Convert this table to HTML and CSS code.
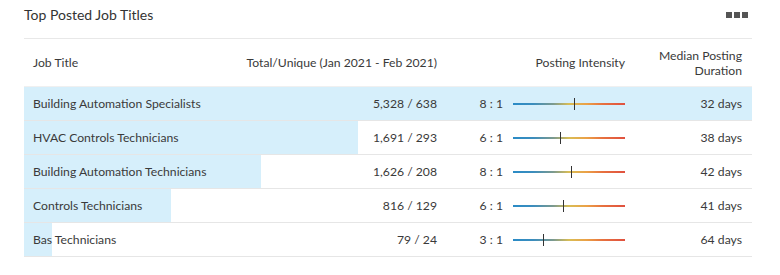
FILE: index.html
```html
<!DOCTYPE html>
<html>
<head>
<meta charset="utf-8">
<link rel="stylesheet" href="styles.css">
</head>
<body>
<div class="card">
  <div class="card-head">
    <h2 class="title">Top Posted Job Titles</h2>
    <div class="more"><span></span><span></span><span></span></div>
  </div>
  <div class="table">
    <div class="row head">
      <div class="c-title">Job Title</div>
      <div class="c-total">Total/Unique (Jan 2021 - Feb 2021)</div>
      <div class="c-int">Posting Intensity</div>
      <div class="c-dur">Median Posting<br>Duration</div>
    </div>
    <div class="row" style="--w:100%">
      <div class="c-title">Building Automation Specialists</div>
      <div class="c-total">5,328 / 638</div>
      <div class="c-int"><span class="ratio">8 : 1</span><span class="scale"><i class="tick" style="left:54.5%"></i></span></div>
      <div class="c-dur">32 days</div>
    </div>
    <div class="row" style="--w:45.9%">
      <div class="c-title">HVAC Controls Technicians</div>
      <div class="c-total">1,691 / 293</div>
      <div class="c-int"><span class="ratio">6 : 1</span><span class="scale"><i class="tick" style="left:42%"></i></span></div>
      <div class="c-dur">38 days</div>
    </div>
    <div class="row" style="--w:32.6%">
      <div class="c-title">Building Automation Technicians</div>
      <div class="c-total">1,626 / 208</div>
      <div class="c-int"><span class="ratio">8 : 1</span><span class="scale"><i class="tick" style="left:51.8%"></i></span></div>
      <div class="c-dur">42 days</div>
    </div>
    <div class="row" style="--w:20.2%">
      <div class="c-title">Controls Technicians</div>
      <div class="c-total">816 / 129</div>
      <div class="c-int"><span class="ratio">6 : 1</span><span class="scale"><i class="tick" style="left:44.8%"></i></span></div>
      <div class="c-dur">41 days</div>
    </div>
    <div class="row" style="--w:3.8%">
      <div class="c-title">Bas Technicians</div>
      <div class="c-total">79 / 24</div>
      <div class="c-int"><span class="ratio">3 : 1</span><span class="scale"><i class="tick" style="left:26.8%"></i></span></div>
      <div class="c-dur">64 days</div>
    </div>
  </div>
</div>
</body>
</html>
```
FILE: styles.css
```css
html, body {
  margin: 0;
  padding: 0;
  background: #ffffff;
}
body {
  font-family: Lato, "Open Sans", sans-serif;
  color: #3a3a3a;
}
.card {
  padding: 0 28px 0 24px;
}
.card-head {
  height: 38px;
  display: flex;
  align-items: flex-start;
  justify-content: space-between;
}
.title {
  margin: 6px 0 0 0;
  font-size: 14px;
  font-weight: 400;
  color: #333;
  line-height: 18px;
}
.more {
  display: flex;
  gap: 2px;
  margin-top: 12px;
  margin-right: 4px;
}
.more span {
  width: 6px;
  height: 6px;
  background: #555;
}
.table {
  border-top: 1px solid #e8e8e8;
}
.row {
  display: grid;
  grid-template-columns: 218px 195px 188px 117px;
  padding-right: 10px;
  height: 33px;
  align-items: center;
  border-bottom: 1px solid #e6e6e6;
  font-size: 12.2px;
  white-space: nowrap;
  background: linear-gradient(to right, #d6effb var(--w), transparent var(--w));
}
.row.head {
  height: 47px;
  background: none;
  border-bottom: 1px solid #f0f0f0;
  line-height: 15px;
}
.c-title {
  padding-left: 9px;
}
.c-total, .c-dur {
  text-align: right;
}
.c-int {
  display: flex;
  align-items: center;
  justify-content: flex-end;
}
.ratio {
  margin-right: 10px;
}
.scale {
  position: relative;
  width: 112px;
  height: 2px;
  background: linear-gradient(to right, #2a8bc6 0%, #3b8dbd 18%, #7c9a8e 36%, #d9bd55 50%, #eba046 66%, #e7713f 80%, #e0513f 100%);
}
.tick {
  position: absolute;
  top: -5px;
  width: 1px;
  height: 12px;
  background: #333;
}
```
